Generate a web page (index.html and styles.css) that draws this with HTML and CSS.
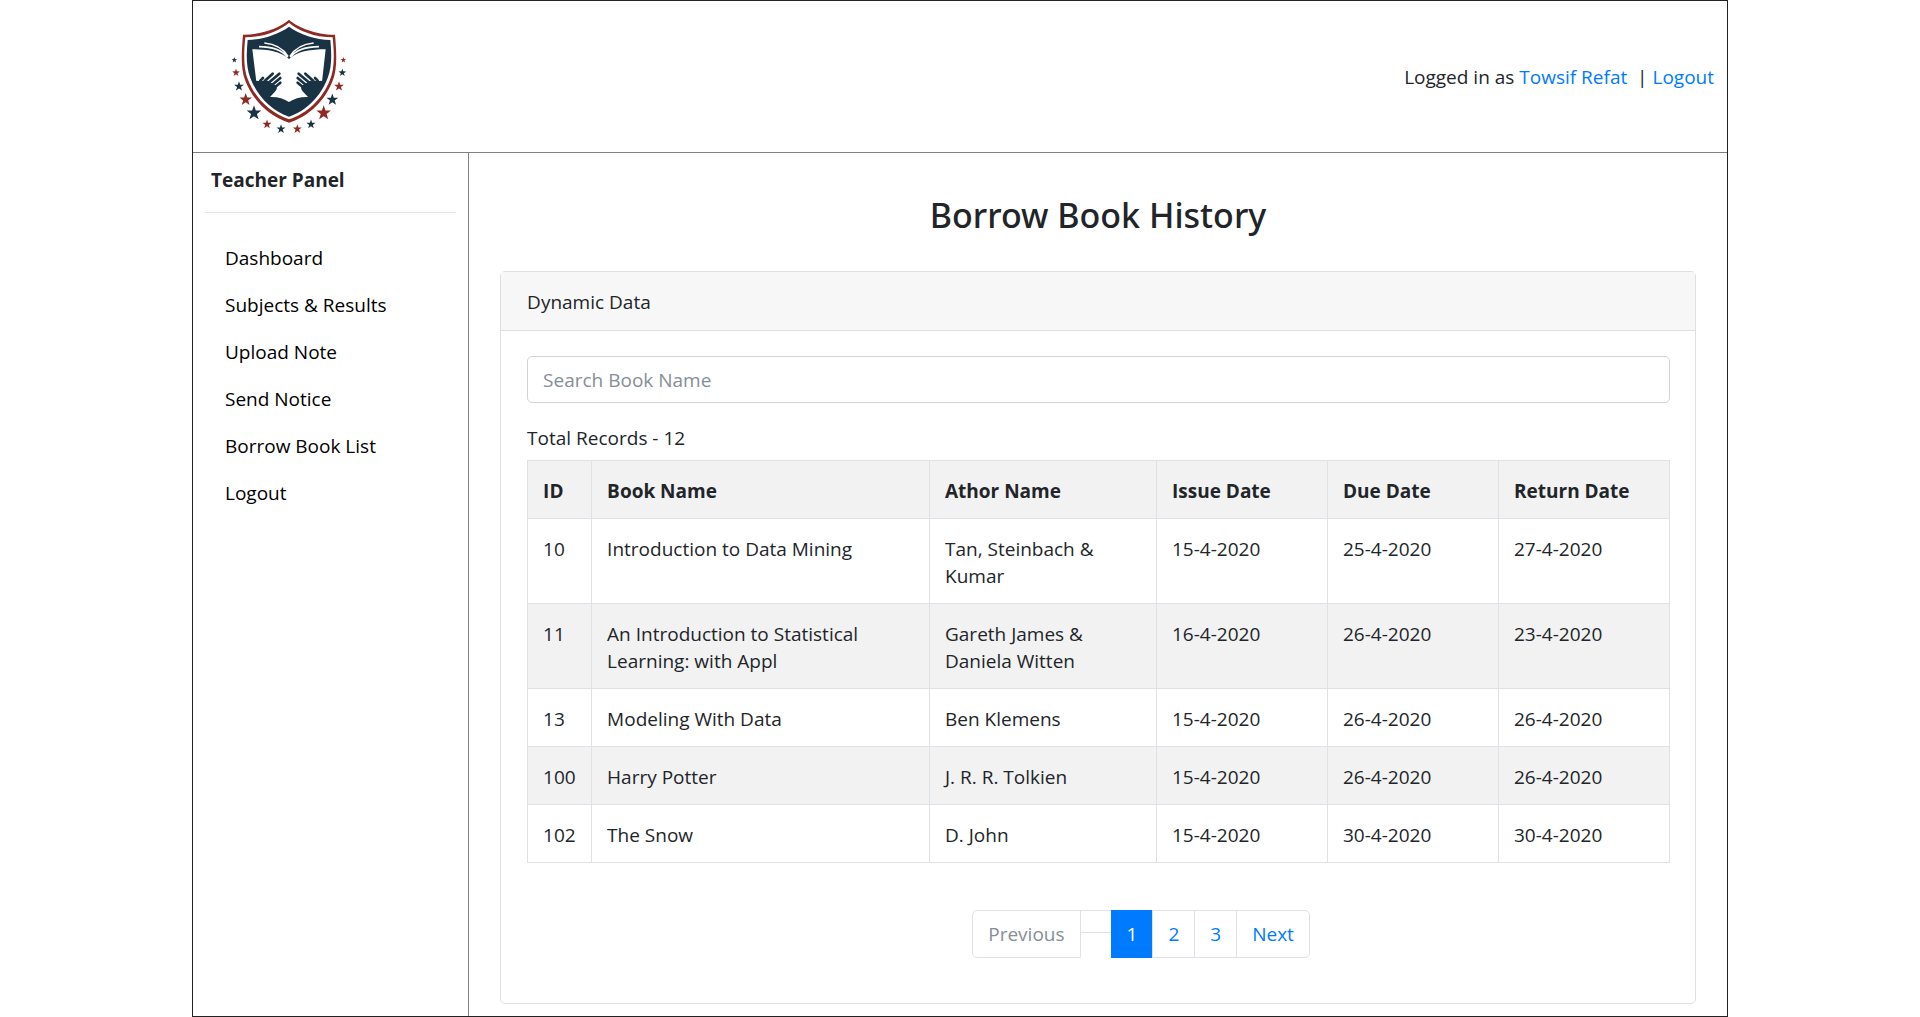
FILE: index.html
```html
<!DOCTYPE html>
<html lang="en">
<head>
<meta charset="utf-8">
<title>Borrow Book History</title>
<link rel="stylesheet" href="styles.css">
</head>
<body>
<div class="page">
  <header class="header">
    <svg class="logo" viewBox="0 0 420 390" role="img" aria-label="School crest">
      <defs>
        <path id="star" d="M0-11 2.6-3.6 10.4-3.5 4.2 1.3 6.5 9 0 4.5-6.5 9-4.2 1.3-10.4-3.5-2.6-3.6z"/>
      </defs>
      <path class="red" d="M207 29C232 52 290 75 345 74C350 130 352 180 338 212C315 272 265 320 207 338C149 320 99 272 76 212C62 180 64 130 69 74C124 75 182 52 207 29z"/>
      <path class="white" d="M207 38C235 62 285 82 338 82C343 130 344 178 330 209C308 266 262 310 207 328C152 310 106 266 84 209C70 178 71 130 76 82C129 82 179 62 207 38z"/>
      <path class="navy" d="M207 50C238 73 288 89 331 90C335 130 336 170 323 204C303 257 260 303 207 320C154 303 111 257 91 204C78 170 79 130 83 90C126 89 176 73 207 50z"/>
      <path class="white" d="M97 118C140 118 180 123 207 147C234 123 274 118 317 118L306 215L264 261C242 260 222 266 207 276C192 266 172 260 150 261L109 215z"/>
      <path class="page-edge" d="M117 110C153 110 184 118 203 142M133 99C166 102 189 115 204 139M297 110C261 110 230 118 211 142M281 99C248 102 225 115 210 139"/>
      <g id="hand">
        <path class="navy" d="M101 212L122 213L143 212L166 226C174 233 170 240 164 246L148 263L120 254z"/>
        <path class="finger" d="M121 212L129 204M134 213L158 191M145 219L178 191M156 225L181 204M162 234L181 218"/>
      </g>
      <use href="#hand" transform="matrix(-1 0 0 1 414 0)"/>
      <g class="navy">
        <use href="#star" transform="translate(43 150) scale(.8)"/>
        <use href="#star" transform="translate(57 229) scale(1.4)"/>
        <use href="#star" transform="translate(102 309) scale(2.1)"/>
        <use href="#star" transform="translate(183 357) scale(1.3)"/>
        <use href="#star" transform="translate(273 343) scale(1.3)"/>
        <use href="#star" transform="translate(337 269) scale(1.7)"/>
        <use href="#star" transform="translate(367 188) scale(1.1)"/>
      </g>
      <g class="red">
        <use href="#star" transform="translate(48 188) scale(1.1)"/>
        <use href="#star" transform="translate(77 269) scale(1.8)"/>
        <use href="#star" transform="translate(141 343) scale(1.3)"/>
        <use href="#star" transform="translate(232 357) scale(1.3)"/>
        <use href="#star" transform="translate(311 309) scale(2.1)"/>
        <use href="#star" transform="translate(357 229) scale(1.4)"/>
        <use href="#star" transform="translate(370 150) scale(.8)"/>
      </g>
    </svg>
    <div class="account">Logged in as <a href="#">Towsif Refat</a> &nbsp;| <a href="#">Logout</a></div>
  </header>
  <div class="body">
    <nav class="sidebar">
      <div class="panel-title">Teacher Panel</div>
      <ul class="menu">
        <li><a href="#">Dashboard</a></li>
        <li><a href="#">Subjects &amp; Results</a></li>
        <li><a href="#">Upload Note</a></li>
        <li><a href="#">Send Notice</a></li>
        <li><a href="#">Borrow Book List</a></li>
        <li><a href="#">Logout</a></li>
      </ul>
    </nav>
    <main class="content">
      <h1>Borrow Book History</h1>
      <section class="card">
        <div class="card-header">Dynamic Data</div>
        <div class="card-body">
          <input class="search" type="text" placeholder="Search Book Name" aria-label="Search Book Name">
          <div class="total">Total Records - 12</div>
          <table class="records">
            <colgroup><col class="c-id"><col><col class="c-author"><col class="c-date"><col class="c-date"><col class="c-date"></colgroup>
            <tr><th>ID</th><th>Book Name</th><th>Athor Name</th><th>Issue Date</th><th>Due Date</th><th>Return Date</th></tr>
            <tr><td>10</td><td>Introduction to Data Mining</td><td>Tan, Steinbach &amp; Kumar</td><td>15-4-2020</td><td>25-4-2020</td><td>27-4-2020</td></tr>
            <tr><td>11</td><td>An Introduction to Statistical Learning: with Appl</td><td>Gareth James &amp; Daniela Witten</td><td>16-4-2020</td><td>26-4-2020</td><td>23-4-2020</td></tr>
            <tr><td>13</td><td>Modeling With Data</td><td>Ben Klemens</td><td>15-4-2020</td><td>26-4-2020</td><td>26-4-2020</td></tr>
            <tr><td>100</td><td>Harry Potter</td><td>J. R. R. Tolkien</td><td>15-4-2020</td><td>26-4-2020</td><td>26-4-2020</td></tr>
            <tr><td>102</td><td>The Snow</td><td>D. John</td><td>15-4-2020</td><td>30-4-2020</td><td>30-4-2020</td></tr>
          </table>
          <ul class="pagination">
            <li><button type="button" disabled>Previous</button></li>
            <li class="gap"></li>
            <li><button type="button" class="active">1</button></li>
            <li><button type="button">2</button></li>
            <li><button type="button">3</button></li>
            <li><button type="button">Next</button></li>
          </ul>
        </div>
      </section>
    </main>
  </div>
</div>
</body>
</html>
```
FILE: styles.css
```css
* { box-sizing: border-box; }

body {
  margin: 0;
  background: #fff;
  color: #212529;
  font: 19px/27px "Open Sans", "Noto Sans", sans-serif;
}

a { color: #007bff; text-decoration: none; }
ul { list-style: none; margin: 0; padding: 0; }

.page {
  display: flex;
  flex-direction: column;
  width: 80%;
  min-height: 100vh;
  margin: 0 auto;
  border: 1px solid #222;
}

.header {
  display: flex;
  align-items: center;
  justify-content: space-between;
  padding: 9px 13px 12px 27px;
  border-bottom: 1px solid #808080;
}
.account { padding-top: 5px; }
.logo { width: 140px; height: 130px; }
.red { fill: #8e2a23; }
.navy { fill: #1a3344; }
.white { fill: #fff; }
.page-edge { fill: none; stroke: #fff; stroke-width: 5; }
.finger { fill: none; stroke: #1a3344; stroke-width: 8; stroke-linecap: round; }

.body { display: flex; flex: 1; }

.sidebar {
  width: 18%;
  padding: 14px 12px;
  border-right: 1px solid #808080;
}
.panel-title {
  padding: 0 6px 18px;
  border-bottom: 1px solid #e5e5e5;
  font-weight: 700;
}
.menu { padding: 22px 20px; }
.menu a { display: block; padding: 10px 0; color: #000; }

.content { flex: 1; padding: 40px 31px 12px; }

h1 {
  margin: 0 0 34px;
  font-family: "Noto Sans", "Open Sans", sans-serif;
  font-size: 34px;
  font-weight: 500;
  line-height: 44px;
  text-align: center;
}

.card { border: 1px solid #dfdfdf; border-radius: 5px; }
.card-header {
  padding: 17px 26px 14px;
  border-bottom: 1px solid #dfdfdf;
  background: #f7f7f7;
}
.card-body { padding: 25px 25px 25px 26px; }

.search {
  display: block;
  width: 100%;
  height: 47px;
  padding: 0 15px;
  border: 1px solid #ced4da;
  border-radius: 5px;
  color: #495057;
  font: inherit;
}
.search::placeholder { color: #868e96; opacity: 1; }

.total { margin: 22px 0 8px; }

.records { width: 100%; border-collapse: collapse; table-layout: fixed; }
.records th, .records td {
  padding: 17px 15px 13px;
  border: 1px solid #dee2e6;
  text-align: left;
  vertical-align: top;
}
.records tr:nth-child(odd) { background: #f2f2f2; }
.c-id { width: 64px; }
.c-author { width: 227px; }
.c-date { width: 171px; }

.pagination {
  display: flex;
  align-items: flex-start;
  justify-content: center;
  padding: 47px 0 20px 86px;
}
.pagination button {
  display: block;
  height: 48px;
  margin-left: -1px;
  padding: 0 15px;
  border: 1px solid #dee2e6;
  background: #fff;
  color: #007bff;
  font: inherit;
}
.pagination li:first-child button { border-radius: 5px 0 0 5px; }
.pagination li:last-child button { border-radius: 0 5px 5px 0; }
.pagination button:disabled { color: #868e96; }
.pagination .active { border-color: #007bff; background: #007bff; color: #fff; }
.gap {
  width: 32px;
  height: 23px;
  margin-left: -1px;
  border: 1px solid #dee2e6;
}
```
